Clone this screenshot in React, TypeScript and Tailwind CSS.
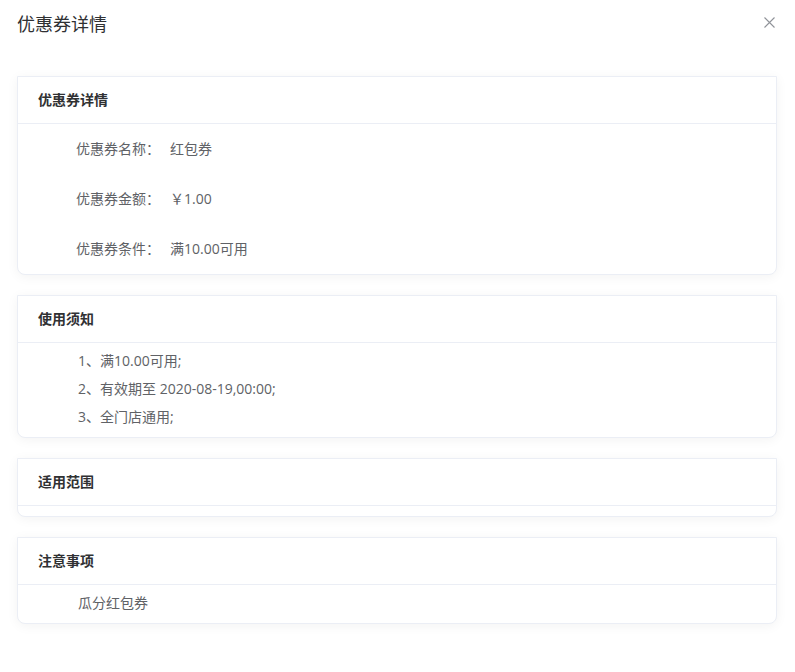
import React from "react";

const font = { fontFamily: '"Open Sans", "Noto Sans CJK SC", sans-serif' };

function Card({ title, children }: { title: string; children?: React.ReactNode }) {
  return (
    <div className="w-[760px] border border-[#ebeef5] rounded-b-[8px] bg-white shadow-[0_2px_12px_0_rgba(0,0,0,0.05)] mb-[20px]">
      <div className="h-[47px] flex items-center px-[20px] pb-[2px] border-b border-[#ebeef5] text-[14px] font-bold text-[#303133]">
        {title}
      </div>
      {children}
    </div>
  );
}

export default function App() {
  const info = [
    { label: "优惠券名称：", value: "红包券" },
    { label: "优惠券金额：", value: "￥1.00" },
    { label: "优惠券条件：", value: "满10.00可用" },
  ];
  const rules = ["1、满10.00可用;", "2、有效期至 2020-08-19,00:00;", "3、全门店通用;"];

  return (
    <div className="w-[795px] h-[672px] bg-white" style={font}>
      <div className="flex items-center justify-between h-[48px] pl-[17px] pr-[20px]">
        <span className="text-[18px] text-[#303133]">优惠券详情</span>
        <svg width="11" height="11" viewBox="0 0 11 11" className="mt-[-4px]">
          <path d="M0.5 0.5 L10.5 10.5 M10.5 0.5 L0.5 10.5" stroke="#909399" strokeWidth="1.1" />
        </svg>
      </div>
      <div className="pt-[28px] pl-[17px]">
        <Card title="优惠券详情">
          <div className="pl-[58px]">
            {info.map((r) => (
              <div key={r.label} className="h-[50px] flex items-center pb-[2px] text-[14px] text-[#606266]">
                <span className="w-[94px]">{r.label}</span>
                <span>{r.value}</span>
              </div>
            ))}
          </div>
        </Card>
        <Card title="使用须知">
          <div className="pt-[4px] pb-[6px] pl-[60px] text-[14px] leading-[28px] text-[#606266]">
            {rules.map((r) => (
              <div key={r}>{r}</div>
            ))}
          </div>
        </Card>
        <Card title="适用范围">
          <div className="h-[10px]" />
        </Card>
        <Card title="注意事项">
          <div className="pt-[4px] pb-[6px] pl-[60px] text-[14px] leading-[28px] text-[#606266]">瓜分红包券</div>
        </Card>
      </div>
    </div>
  );
}
